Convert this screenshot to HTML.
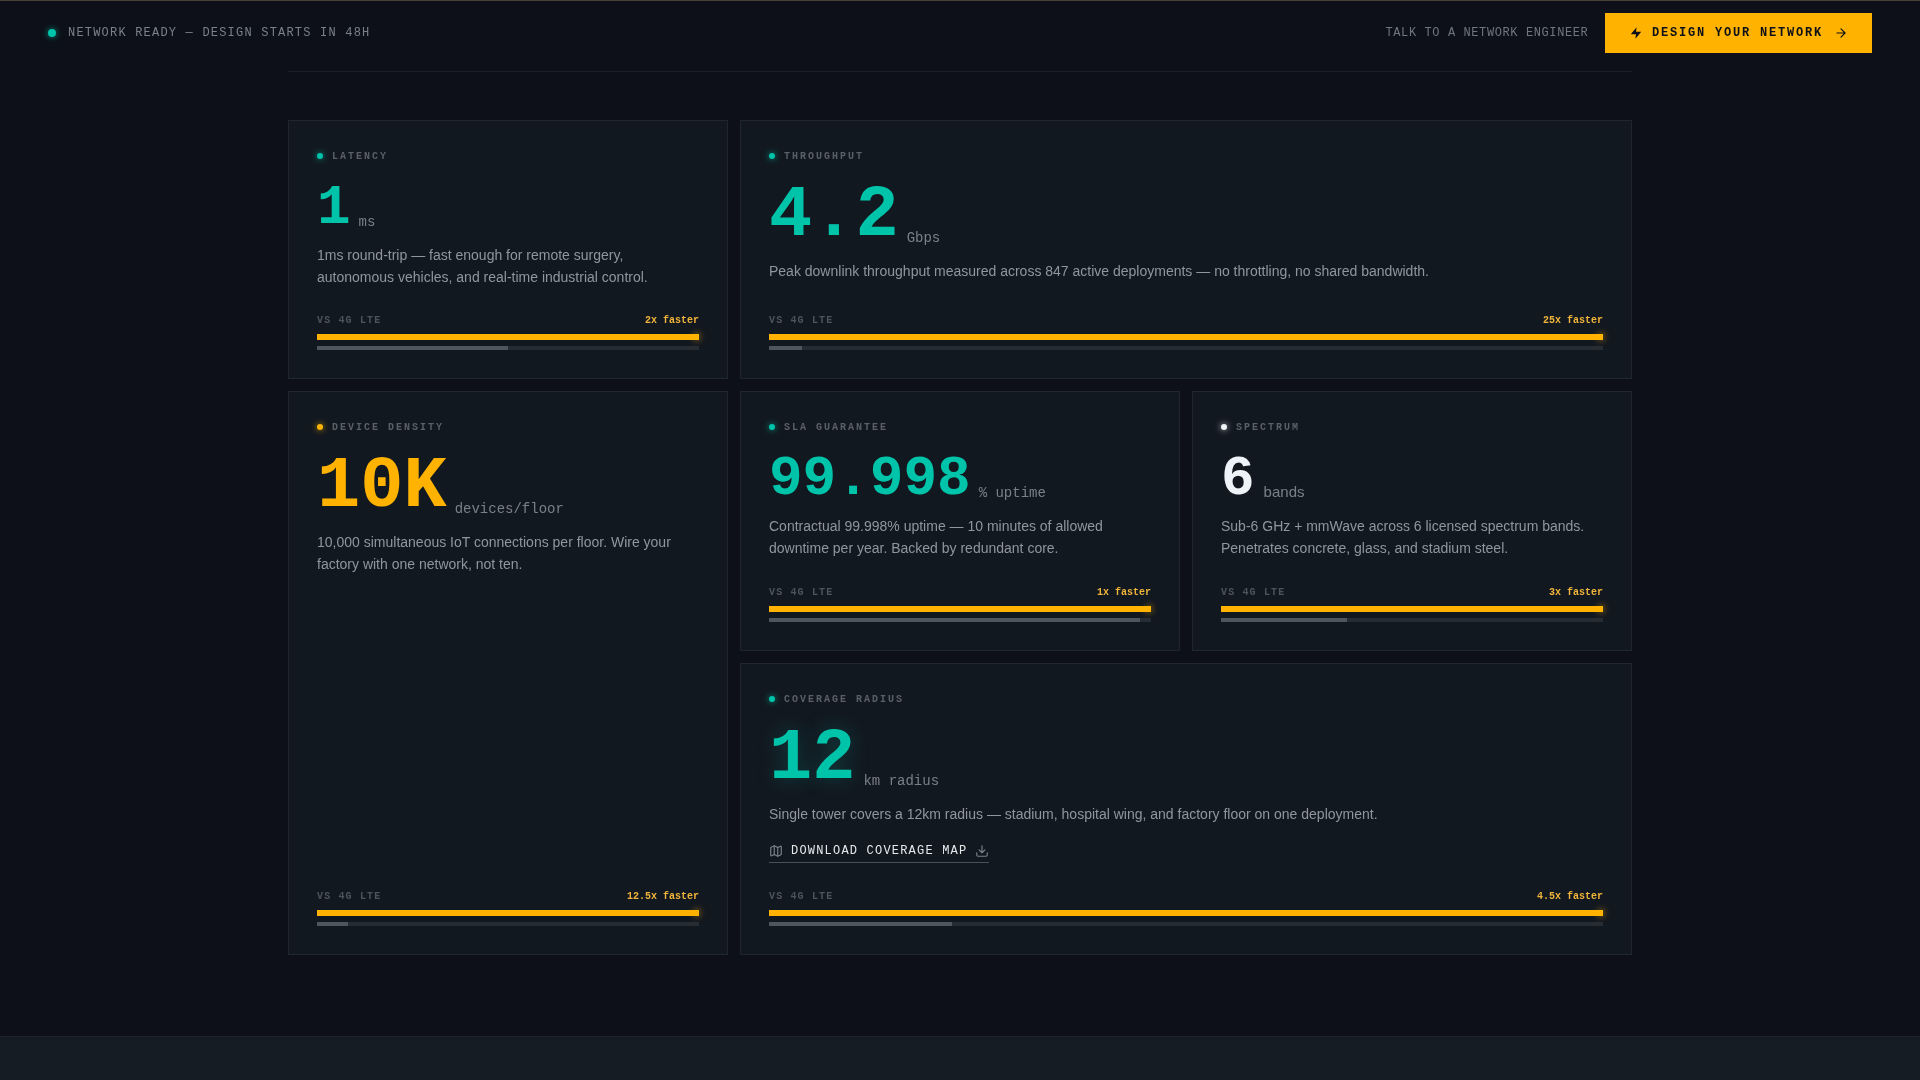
<!DOCTYPE html>
<html><head><meta charset="utf-8">
<style>
*{box-sizing:border-box;margin:0;padding:0}
html,body{width:1920px;height:1080px;overflow:hidden}
body{background:#0d1018;font-family:"Liberation Sans",sans-serif;position:relative}
.mono{font-family:"Liberation Mono",monospace}
.topline{position:absolute;left:0;top:0;width:1920px;height:1px;background:#4a4333}
.status{position:absolute;left:48px;top:26px;height:14px;display:flex;align-items:center;font-family:"Liberation Mono",monospace;font-size:12px;letter-spacing:1.2px;color:#7b8189}
.status .d{width:8px;height:8px;border-radius:50%;background:#00c4aa;box-shadow:0 0 6px rgba(0,196,170,.7);margin-right:12px}
.talk{position:absolute;left:1385.5px;top:26px;font-family:"Liberation Mono",monospace;font-size:12px;letter-spacing:.6px;color:#70767e}
.btn{position:absolute;left:1605px;top:13px;width:267px;height:40px;background:#ffb300;color:#0d1018;font-family:"Liberation Mono",monospace;font-weight:bold;font-size:12px;letter-spacing:1.8px;display:flex;align-items:center;justify-content:center}
.hline{position:absolute;left:288px;top:71px;width:1344px;height:1px;background:#1c2028}
.grid{will-change:transform;position:absolute;left:288px;top:120px;width:1344px;display:grid;grid-template-columns:440px 440px 440px;grid-template-rows:259px 260px 292px;gap:12px}
.card{background:#121820;border:1px solid #21262e;padding:28px;display:flex;flex-direction:column;position:relative}
.lbl{display:flex;align-items:center;height:14px;font-family:"Liberation Mono",monospace;font-weight:bold;font-size:10px;letter-spacing:2px;color:#5a6067}
.lbl .d{width:6px;height:6px;border-radius:50%;background:#00c4aa;box-shadow:0 0 6px rgba(0,196,170,.8);margin-right:9px}
.lbl .d.a{background:#ffb300;box-shadow:0 0 6px rgba(255,179,0,.8)}
.lbl .d.w{background:#f0f4f8;box-shadow:0 0 6px rgba(240,244,248,.8)}
.num{display:flex;align-items:flex-end;margin-top:17px}
.num.xl{margin-top:17px}
.n{font-family:"Liberation Mono",monospace;font-weight:bold;color:#00c4aa;line-height:1}
.u{font-family:"Liberation Mono",monospace;color:#7a8088}
.desc{font-size:14px;line-height:22.4px;color:#8f969e;margin-top:8px}
.bars{margin-top:auto}
.bl{display:flex;justify-content:space-between;font-family:"Liberation Mono",monospace;font-size:10px;height:12px;line-height:13px}
.bl .l{color:#4e545c;letter-spacing:1.15px;font-weight:bold}
.bl .r{color:#f0b43a;font-weight:bold}
.b1{margin-top:8px;height:6px;background:#ffb300;position:relative}
.b1:after{content:"";position:absolute;right:0;top:0;width:4px;height:6px;background:#ffb300;box-shadow:0 0 6px 1px rgba(255,179,0,.45)}
.b2{margin-top:6px;height:4px;background:#262c33;position:relative}
.b2 i{position:absolute;left:0;top:0;height:4px;background:#4e565e}
.dl{align-self:flex-start;margin-top:19px;display:flex;align-items:center;gap:8px;padding-bottom:4px;border-bottom:1px solid #4a5058;font-family:"Liberation Mono",monospace;font-size:12px;letter-spacing:1.2px;color:#e6e9ec}
.glow{text-shadow:0 0 20px rgba(0,196,170,.25)}
</style></head><body>
<div class="topline"></div>
<div class="hdr" style="position:absolute;left:0;top:0;width:1920px;height:72px;will-change:transform">
<div class="status"><span class="d"></span>NETWORK READY — DESIGN STARTS IN 48H</div>
<div class="talk">TALK TO A NETWORK ENGINEER</div>
<div class="btn"><svg width="14" height="14" viewBox="0 0 24 24" style="margin-right:9px;margin-top:-1px"><polygon points="13 2 3 14 12 14 11 22 21 10 12 10 13 2" fill="#0d1018"/></svg><span style="margin-top:-1px;will-change:transform">DESIGN YOUR NETWORK</span><svg width="14" height="14" viewBox="0 0 24 24" fill="none" stroke="#0d1018" stroke-width="2" stroke-linecap="round" stroke-linejoin="round" style="margin-left:10px;margin-top:-1px"><path d="M5 12h14M12 5l7 7-7 7"/></svg></div>
<div class="hline"></div>
</div>

<div class="grid">
  <div class="card" style="grid-column:1;grid-row:1">
    <div class="lbl"><span class="d"></span>LATENCY</div>
    <div class="num"><span class="n" style="font-size:56px">1</span><span class="u" style="font-size:14px;margin-left:8px;margin-bottom:6px">ms</span></div>
    <div class="desc">1ms round-trip — fast enough for remote surgery, autonomous vehicles, and real-time industrial control.</div>
    <div class="bars"><div class="bl"><span class="l">VS 4G LTE</span><span class="r">2x faster</span></div><div class="b1"></div><div class="b2"><i style="width:50%"></i></div></div>
  </div>
  <div class="card" style="grid-column:2/4;grid-row:1">
    <div class="lbl"><span class="d"></span>THROUGHPUT</div>
    <div class="num xl"><span class="n" style="font-size:72px">4.2</span><span class="u" style="font-size:14px;margin-left:8px;margin-bottom:6px">Gbps</span></div>
    <div class="desc">Peak downlink throughput measured across 847 active deployments — no throttling, no shared bandwidth.</div>
    <div class="bars"><div class="bl"><span class="l">VS 4G LTE</span><span class="r">25x faster</span></div><div class="b1"></div><div class="b2"><i style="width:4%"></i></div></div>
  </div>
  <div class="card" style="grid-column:1;grid-row:2/4">
    <div class="lbl"><span class="d a"></span>DEVICE DENSITY</div>
    <div class="num xl"><span class="n" style="font-size:72px;color:#ffb300">10K</span><span class="u" style="font-size:14px;margin-left:8px;margin-bottom:6px">devices/floor</span></div>
    <div class="desc">10,000 simultaneous IoT connections per floor. Wire your factory with one network, not ten.</div>
    <div class="bars"><div class="bl"><span class="l">VS 4G LTE</span><span class="r">12.5x faster</span></div><div class="b1"></div><div class="b2"><i style="width:8%"></i></div></div>
  </div>
  <div class="card" style="grid-column:2;grid-row:2">
    <div class="lbl"><span class="d"></span>SLA GUARANTEE</div>
    <div class="num"><span class="n" style="font-size:56px">99.998</span><span class="u" style="font-size:14px;margin-left:8px;margin-bottom:6px">% uptime</span></div>
    <div class="desc">Contractual 99.998% uptime — 10 minutes of allowed downtime per year. Backed by redundant core.</div>
    <div class="bars"><div class="bl"><span class="l">VS 4G LTE</span><span class="r">1x faster</span></div><div class="b1"></div><div class="b2"><i style="width:97%"></i></div></div>
  </div>
  <div class="card" style="grid-column:3;grid-row:2">
    <div class="lbl"><span class="d w"></span>SPECTRUM</div>
    <div class="num"><span class="n" style="font-size:56px;color:#eef3f8">6</span><span class="u" style="font-size:15px;margin-left:9px;margin-bottom:7px;font-family:'Liberation Sans',sans-serif">bands</span></div>
    <div class="desc">Sub-6 GHz + mmWave across 6 licensed spectrum bands. Penetrates concrete, glass, and stadium steel.</div>
    <div class="bars"><div class="bl"><span class="l">VS 4G LTE</span><span class="r">3x faster</span></div><div class="b1"></div><div class="b2"><i style="width:33%"></i></div></div>
  </div>
  <div class="card" style="grid-column:2/4;grid-row:3">
    <div class="lbl"><span class="d"></span>COVERAGE RADIUS</div>
    <div class="num xl"><span class="n glow" style="font-size:72px">12</span><span class="u" style="font-size:14px;margin-left:8px;margin-bottom:6px">km radius</span></div>
    <div class="desc">Single tower covers a 12km radius — stadium, hospital wing, and factory floor on one deployment.</div>
    <div class="dl"><svg width="14" height="14" viewBox="0 0 24 24" fill="none" stroke="#7a8088" stroke-width="2" stroke-linecap="round" stroke-linejoin="round"><path d="M14.106 5.553a2 2 0 0 0 1.788 0l3.659-1.83A1 1 0 0 1 21 4.619v12.764a1 1 0 0 1-.553.894l-4.553 2.277a2 2 0 0 1-1.788 0l-4.212-2.106a2 2 0 0 0-1.788 0l-3.659 1.83A1 1 0 0 1 3 19.381V6.618a1 1 0 0 1 .553-.894l4.553-2.277a2 2 0 0 1 1.788 0z"/><path d="M15 5.764v15M9 3.236v15"/></svg><span>DOWNLOAD COVERAGE MAP</span><svg width="14" height="14" viewBox="0 0 24 24" fill="none" stroke="#7a8088" stroke-width="2" stroke-linecap="round" stroke-linejoin="round"><path d="M12 15V3M21 15v4a2 2 0 0 1-2 2H5a2 2 0 0 1-2-2v-4M7 10l5 5 5-5"/></svg></div>
    <div class="bars"><div class="bl"><span class="l">VS 4G LTE</span><span class="r">4.5x faster</span></div><div class="b1"></div><div class="b2"><i style="width:22%"></i></div></div>
  </div>
</div>
<div class="footer" style="position:absolute;left:0;top:1036px;width:1920px;height:44px;background:#161c23;border-top:1px solid #1c232b"></div>
</body></html>
